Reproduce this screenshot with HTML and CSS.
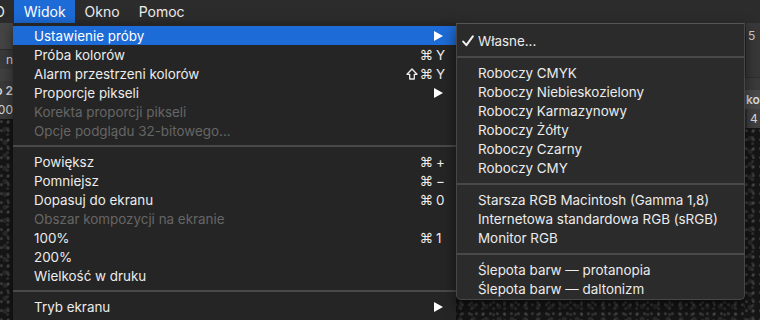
FILE: index.html
```html
<!DOCTYPE html>
<html lang="pl">
<head>
<meta charset="utf-8">
<title>Widok</title>
<link rel="stylesheet" href="styles.css">
</head>
<body>
<div class="screen">
  <div class="menubar">
    <span class="mb-item mb-cut">3D</span>
    <span class="mb-item active">Widok</span>
    <span class="mb-item">Okno</span>
    <span class="mb-item">Pomoc</span>
  </div>
  <div class="workspace">
    <div class="strip strip-left">
      <div class="panel">
        <div class="p-row p-top"></div>
        <div class="p-row p-txt">n</div>
        <div class="p-row p-gap"></div>
        <div class="p-row p-txt bold">o 2</div>
        <div class="p-row p-txt">00</div>
      </div>
      <div class="photo"></div>
    </div>
    <div class="middle">
      <div class="photo"></div>
    </div>
    <div class="strip strip-right">
      <div class="panel">
        <div class="p-row p-top r-top">5</div>
        <div class="p-row p-gap2"></div>
        <div class="p-row p-txt r-light bold">kolo</div>
        <div class="p-row p-txt r-box">4</div>
      </div>
      <div class="photo"></div>
    </div>
  </div>

  <div class="menu menu-main">
    <div class="item selected"><span class="label">Ustawienie próby</span><svg class="arrow" width="9" height="10" viewBox="0 0 9 10"><polygon points="0,0 9,5 0,10" fill="#fff"/></svg></div>
    <div class="item"><span class="label">Próba kolorów</span><span class="sc"><span class="mods">⌘</span><span class="key">Y</span></span></div>
    <div class="item"><span class="label">Alarm przestrzeni kolorów</span><span class="sc"><svg class="shift" width="12" height="12" viewBox="0 0 12 12"><path d="M6 1 L11 6.3 L8.3 6.3 L8.3 11 L3.7 11 L3.7 6.3 L1 6.3 Z" fill="none" stroke="#ececec" stroke-width="1.3" stroke-linejoin="round"/></svg><span class="mods">⌘</span><span class="key">Y</span></span></div>
    <div class="item"><span class="label">Proporcje pikseli</span><svg class="arrow" width="9" height="10" viewBox="0 0 9 10"><polygon points="0,0 9,5 0,10" fill="#fff"/></svg></div>
    <div class="item disabled"><span class="label">Korekta proporcji pikseli</span></div>
    <div class="item disabled"><span class="label">Opcje podglądu 32-bitowego...</span></div>
    <div class="sep"></div>
    <div class="item"><span class="label">Powiększ</span><span class="sc"><span class="mods">⌘</span><span class="key">+</span></span></div>
    <div class="item"><span class="label">Pomniejsz</span><span class="sc"><span class="mods">⌘</span><span class="key">−</span></span></div>
    <div class="item"><span class="label">Dopasuj do ekranu</span><span class="sc"><span class="mods">⌘</span><span class="key">0</span></span></div>
    <div class="item disabled"><span class="label">Obszar kompozycji na ekranie</span></div>
    <div class="item"><span class="label">100%</span><span class="sc"><span class="mods">⌘</span><span class="key">1</span></span></div>
    <div class="item"><span class="label">200%</span></div>
    <div class="item"><span class="label">Wielkość w druku</span></div>
    <div class="sep"></div>
    <div class="item"><span class="label">Tryb ekranu</span><svg class="arrow" width="9" height="10" viewBox="0 0 9 10"><polygon points="0,0 9,5 0,10" fill="#fff"/></svg></div>
  </div>

  <div class="menu menu-sub">
    <div class="item"><svg class="check" width="12" height="12" viewBox="0 0 12 12"><path d="M1.2 6.6 L4.4 10.2 L10.8 1.4" fill="none" stroke="#f2f2f2" stroke-width="2" stroke-linecap="round" stroke-linejoin="round"/></svg><span class="label">Własne...</span></div>
    <div class="sep sep-13"></div>
    <div class="item"><span class="label">Roboczy CMYK</span></div>
    <div class="item"><span class="label">Roboczy Niebieskozielony</span></div>
    <div class="item"><span class="label">Roboczy Karmazynowy</span></div>
    <div class="item"><span class="label">Roboczy Żółty</span></div>
    <div class="item"><span class="label">Roboczy Czarny</span></div>
    <div class="item"><span class="label">Roboczy CMY</span></div>
    <div class="sep sep-13"></div>
    <div class="item"><span class="label">Starsza RGB Macintosh (Gamma 1,8)</span></div>
    <div class="item"><span class="label">Internetowa standardowa RGB (sRGB)</span></div>
    <div class="item"><span class="label">Monitor RGB</span></div>
    <div class="sep sep-13"></div>
    <div class="item"><span class="label">Ślepota barw — protanopia</span></div>
    <div class="item"><span class="label">Ślepota barw — daltonizm</span></div>
  </div>
</div>
</body>
</html>
```

FILE: styles.css
```css
* { box-sizing: border-box; }
html, body { margin: 0; padding: 0; background: #1a1a1a; }
body { font-family: Inter, "Noto Sans", "DejaVu Sans", sans-serif; }

.screen {
  position: relative;
  width: 760px;
  height: 320px;
  overflow: hidden;
  background: #1a1a1a;
}

/* menubar */
.menubar {
  height: 23px;
  display: flex;
  align-items: stretch;
  background: #2c2c2c;
  font-size: 14px;
  color: #ececec;
}
.mb-item {
  display: flex;
  align-items: center;
  padding: 0 9px 0 10px;
}
.mb-cut { margin-left: -24px; }
.mb-item.active { background: #1d6bd6; color: #fff; }

/* background workspace */
.workspace {
  display: flex;
  height: 297px;
}
.strip { display: flex; flex-direction: column; }
.strip-left { width: 13px; }
.strip-right { width: 15px; }
.middle { flex: 1; display: flex; flex-direction: column; }
.panel {
  display: flex;
  flex-direction: column;
  background: #3a3a3a;
  font-size: 12px;
  color: #d8d8d8;
  overflow: hidden;
  white-space: nowrap;
}
.p-row { height: 19px; display: flex; align-items: center; }
.p-top { height: 27px; background: #454545; border-bottom: 1px solid #2e2e2e; }
.p-gap { height: 12px; background: #404040; }
.p-gap2 { height: 12px; background: #3b3b3b; }
.strip-left .p-txt { justify-content: flex-end; }
.bold { font-weight: 600; }
.r-top { height: 55px; align-items: flex-start; padding-top: 5px; padding-left: 2px; background: #383838; border-left: 1px solid #262626; color: #cfcfcf; }
.r-light { background: #4a4a4a; padding-left: 1px; color: #ddd; }
.r-box { background: #404040; padding-left: 3px; border-left: 2px solid #303030; }
.photo {
  flex: 1;
  background-color: #161616;
  background-image:
    radial-gradient(circle at 20% 30%, rgba(120,120,120,0.35) 0 1px, transparent 2px),
    radial-gradient(circle at 70% 60%, rgba(90,90,90,0.4) 0 1px, transparent 2px),
    radial-gradient(circle at 40% 80%, rgba(60,60,60,0.5) 0 2px, transparent 3px);
  background-size: 7px 9px, 11px 6px, 13px 13px;
}

/* menus */
.menu {
  position: absolute;
  font-size: 13.4px;
  color: #ececec;
  display: flex;
  flex-direction: column;
}
.menu-main {
  left: 13px;
  top: 23px;
  width: 443px;
  height: 310px;
  padding-top: 3px;
  background: #252525;
  box-shadow: 0 4px 12px rgba(0,0,0,0.5);
}
.menu-sub {
  left: 456px;
  top: 23px;
  width: 289px;
  height: 277px;
  padding-top: 7px;
  background: #2b2b2b;
  border: 1px solid #474747;
  border-top-color: #555;
  border-radius: 0 0 5px 5px;
  box-shadow: 0 6px 14px rgba(0,0,0,0.55);
}
.item {
  height: 19px;
  flex: none;
  display: flex;
  align-items: center;
  white-space: nowrap;
}
.menu-main .item { padding: 0 12px 0 21px; }
.menu-sub .item { padding: 0 12px 0 21px; position: relative; }
.item .label { flex: 1; }
.item.selected { background: #1d6bd6; color: #fff; }
.item.disabled { color: #666; }
.sc { display: flex; align-items: center; }
.shift { display: block; margin-right: 2px; }
.mods { font-family: "DejaVu Sans", sans-serif; font-size: 13.5px; margin-right: 3px; }
.key { width: 8px; }
.arrow { display: block; margin-right: 1px; }
.check {
  position: absolute;
  left: 5px;
  top: 4px;
}
.sep {
  height: 12px;
  flex: none;
  display: flex;
  align-items: center;
}
.sep::before {
  content: "";
  display: block;
  width: 100%;
  height: 2px;
  background: #494949;
}
.sep-13 { height: 13px; }
```
